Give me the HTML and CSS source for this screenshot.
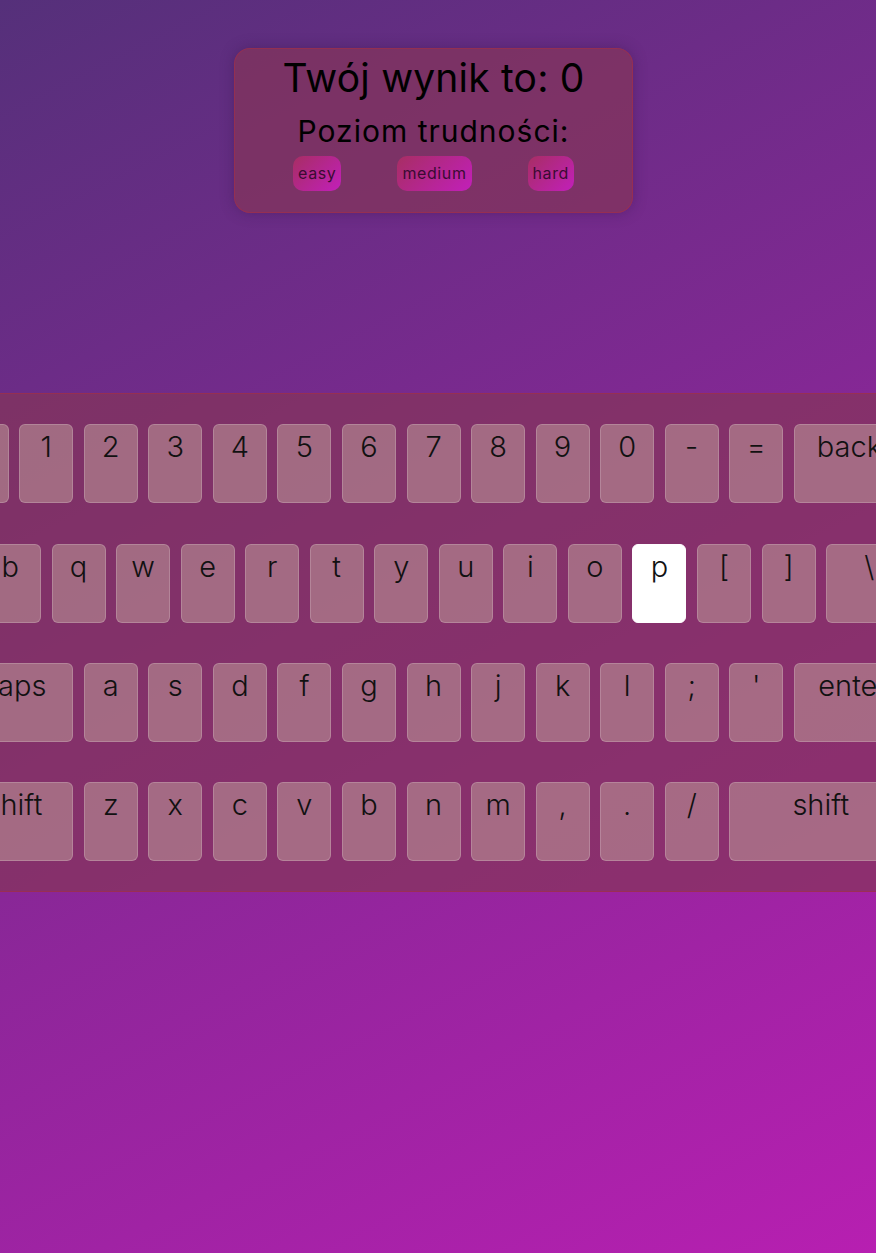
FILE: index.html
```html
<!DOCTYPE html>
<html lang="pl">
<head>
<meta charset="utf-8">
<title>Klawiatura</title>
<link rel="stylesheet" href="styles.css">
</head>
<body>
<div class="top">
  <div class="score">
    <h1 class="title">Twój wynik to: 0</h1>
    <h2 class="level">Poziom trudności:</h2>
    <div class="levels">
      <button class="lvl">easy</button>
      <button class="lvl">medium</button>
      <button class="lvl">hard</button>
    </div>
  </div>
</div>
<div class="keyboard">
  <div class="row">
    <div class="key">`</div><div class="key">1</div><div class="key">2</div><div class="key">3</div><div class="key">4</div><div class="key">5</div><div class="key">6</div><div class="key">7</div><div class="key">8</div><div class="key">9</div><div class="key">0</div><div class="key">-</div><div class="key">=</div><div class="key w2 left">backspace</div>
  </div>
  <div class="row">
    <div class="key w15">tab</div><div class="key">q</div><div class="key">w</div><div class="key">e</div><div class="key">r</div><div class="key">t</div><div class="key">y</div><div class="key">u</div><div class="key">i</div><div class="key">o</div><div class="key active">p</div><div class="key">[</div><div class="key">]</div><div class="key w15">\</div>
  </div>
  <div class="row">
    <div class="key w2">caps</div><div class="key">a</div><div class="key">s</div><div class="key">d</div><div class="key">f</div><div class="key">g</div><div class="key">h</div><div class="key">j</div><div class="key">k</div><div class="key">l</div><div class="key">;</div><div class="key">'</div><div class="key w2">enter</div>
  </div>
  <div class="row">
    <div class="key w2">shift</div><div class="key">z</div><div class="key">x</div><div class="key">c</div><div class="key">v</div><div class="key">b</div><div class="key">n</div><div class="key">m</div><div class="key">,</div><div class="key">.</div><div class="key">/</div><div class="key w3">shift</div>
  </div>
</div>
</body>
</html>
```
FILE: styles.css
```css
* { box-sizing: border-box; }
html, body { margin: 0; padding: 0; }
body {
  min-height: 100vh;
  overflow-x: hidden;
  background: linear-gradient(153deg, #55307a 0%, #b71fb1 100%);
  font-family: Inter, Lato, "Noto Sans", sans-serif;
  color: #000;
}
.top {
  display: flex;
  justify-content: center;
  padding: 48px 9px 0 0;
}
.score {
  width: 399px;
  height: 165px;
  border-radius: 16px;
  border: 1px solid rgba(170, 45, 65, 0.55);
  background: rgba(133, 53, 88, 0.7);
  box-shadow: 0 0 14px rgba(50, 20, 70, 0.35);
  display: flex;
  flex-direction: column;
  align-items: center;
  padding-top: 5px;
}
.title {
  margin: 0;
  font-size: 39px;
  line-height: 48px;
  font-weight: 400;
  letter-spacing: 0.2px;
}
.level {
  margin: 11px 0 0;
  font-size: 30px;
  line-height: 36px;
  font-weight: 400;
  letter-spacing: 1px;
}
.levels {
  display: flex;
  gap: 56px;
  margin-top: 7px;
}
.lvl {
  height: 35px;
  padding: 0 5px;
  border: 0;
  border-radius: 10px;
  background: linear-gradient(135deg, #a72e63 0%, #c21fba 100%);
  font-family: Inter, Lato, "Noto Sans", sans-serif;
  font-size: 16px;
  line-height: 35px;
  font-weight: 400;
  letter-spacing: 0.6px;
  color: #3a0b33;
}
.keyboard {
  margin-top: 180px;
  padding: 30.3px 9px 30px 0;
  background: rgba(133, 53, 88, 0.7);
  border-top: 1px solid rgba(170, 45, 65, 0.55);
  border-bottom: 1px solid rgba(170, 45, 65, 0.55);
  display: flex;
  flex-direction: column;
  gap: 40.33px;
}
.row {
  display: flex;
  justify-content: center;
  gap: 10.55px;
}
.key {
  flex: none;
  width: 54px;
  height: 79px;
  border-radius: 6px;
  background: rgba(185, 145, 148, 0.6);
  border: 1px solid rgba(255, 255, 255, 0.18);
  text-align: center;
  font-size: 29px;
  font-weight: 300;
  line-height: 44px;
  white-space: nowrap;
  color: #111;
}
.w15 { width: 86.3px; }
.w2 { width: 118.55px; }
.w3 { width: 183.1px; }
.left { text-align: left; padding-left: 22px; }
.active { background: #fff; border-color: #fff; }
```
